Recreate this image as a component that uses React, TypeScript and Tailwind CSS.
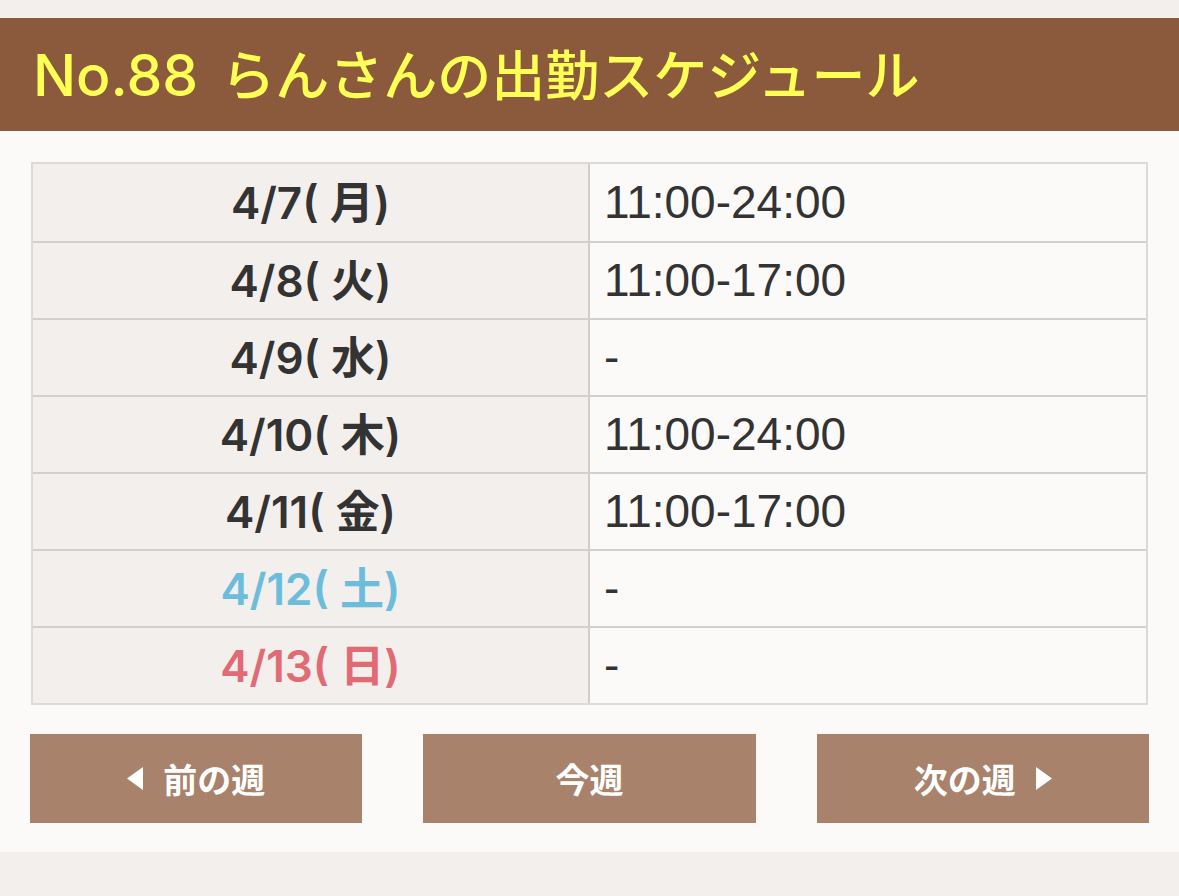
const rows = [
  { date: "4/7( 月)", time: "11:00-24:00", color: "text-[#333333]" },
  { date: "4/8( 火)", time: "11:00-17:00", color: "text-[#333333]" },
  { date: "4/9( 水)", time: "-", color: "text-[#333333]" },
  { date: "4/10( 木)", time: "11:00-24:00", color: "text-[#333333]" },
  { date: "4/11( 金)", time: "11:00-17:00", color: "text-[#333333]" },
  { date: "4/12( 土)", time: "-", color: "text-[#6cbcdc]" },
  { date: "4/13( 日)", time: "-", color: "text-[#e06b74]" },
];

const cjk = { fontFamily: '"Noto Sans CJK JP", sans-serif' };
const latin = { fontFamily: '"Liberation Sans", "Noto Sans CJK JP", sans-serif' };
const inter = { fontFamily: 'Inter, "Noto Sans CJK JP", sans-serif' };

export default function App() {
  return (
    <div className="min-h-screen bg-[#f3efed] pt-[18px]" style={cjk}>
      {/* Title */}
      <div className="h-[113px] bg-[#8b5a3c] pl-[33px] flex items-center">
        <h1 className="leading-none text-[#ffff55] flex items-baseline">
          <span className="text-[57px] font-medium mr-[23px]" style={inter}>
            No.88
          </span>
          <span className="text-[54px] font-medium">らんさんの出勤スケジュール</span>
        </h1>
      </div>

      {/* Schedule */}
      <div className="bg-[#fbfaf8] px-[30px] pt-[31px] pb-[29px]">
        <div className="border-2 border-[#dcdad8] mx-[1px]">
          {rows.map((r, i) => (
            <div
              key={r.date}
              className={`flex h-[77px] ${i > 0 ? "border-t-2 border-[#d2d0ce]" : ""}`}
            >
              <div
                className={`w-[557px] bg-[#f3efed] border-r-2 border-[#d0cdca] flex items-center justify-center text-[44px] font-semibold ${r.color}`}
                style={inter}
              >
                {r.date}
              </div>
              <div
                className="flex-1 bg-[#fbfaf9] flex items-center pl-[14px] text-[46px] text-[#333333]"
                style={latin}
              >
                {r.time}
              </div>
            </div>
          ))}
        </div>

        {/* Week nav */}
        <div className="mt-[29px] grid grid-cols-3 gap-[61px]">
          <button className="h-[89px] bg-[#a8826a] text-white text-[34px] font-semibold flex items-center justify-center gap-[20px]">
            <svg width="16" height="23" viewBox="0 0 16 23">
              <polygon points="16,0 16,23 0,11.5" fill="white" />
            </svg>
            前の週
          </button>
          <button className="h-[89px] bg-[#a8826a] text-white text-[34px] font-semibold flex items-center justify-center">
            今週
          </button>
          <button className="h-[89px] bg-[#a8826a] text-white text-[34px] font-semibold flex items-center justify-center gap-[20px]">
            次の週
            <svg width="16" height="23" viewBox="0 0 16 23">
              <polygon points="0,0 0,23 16,11.5" fill="white" />
            </svg>
          </button>
        </div>
      </div>
    </div>
  );
}
